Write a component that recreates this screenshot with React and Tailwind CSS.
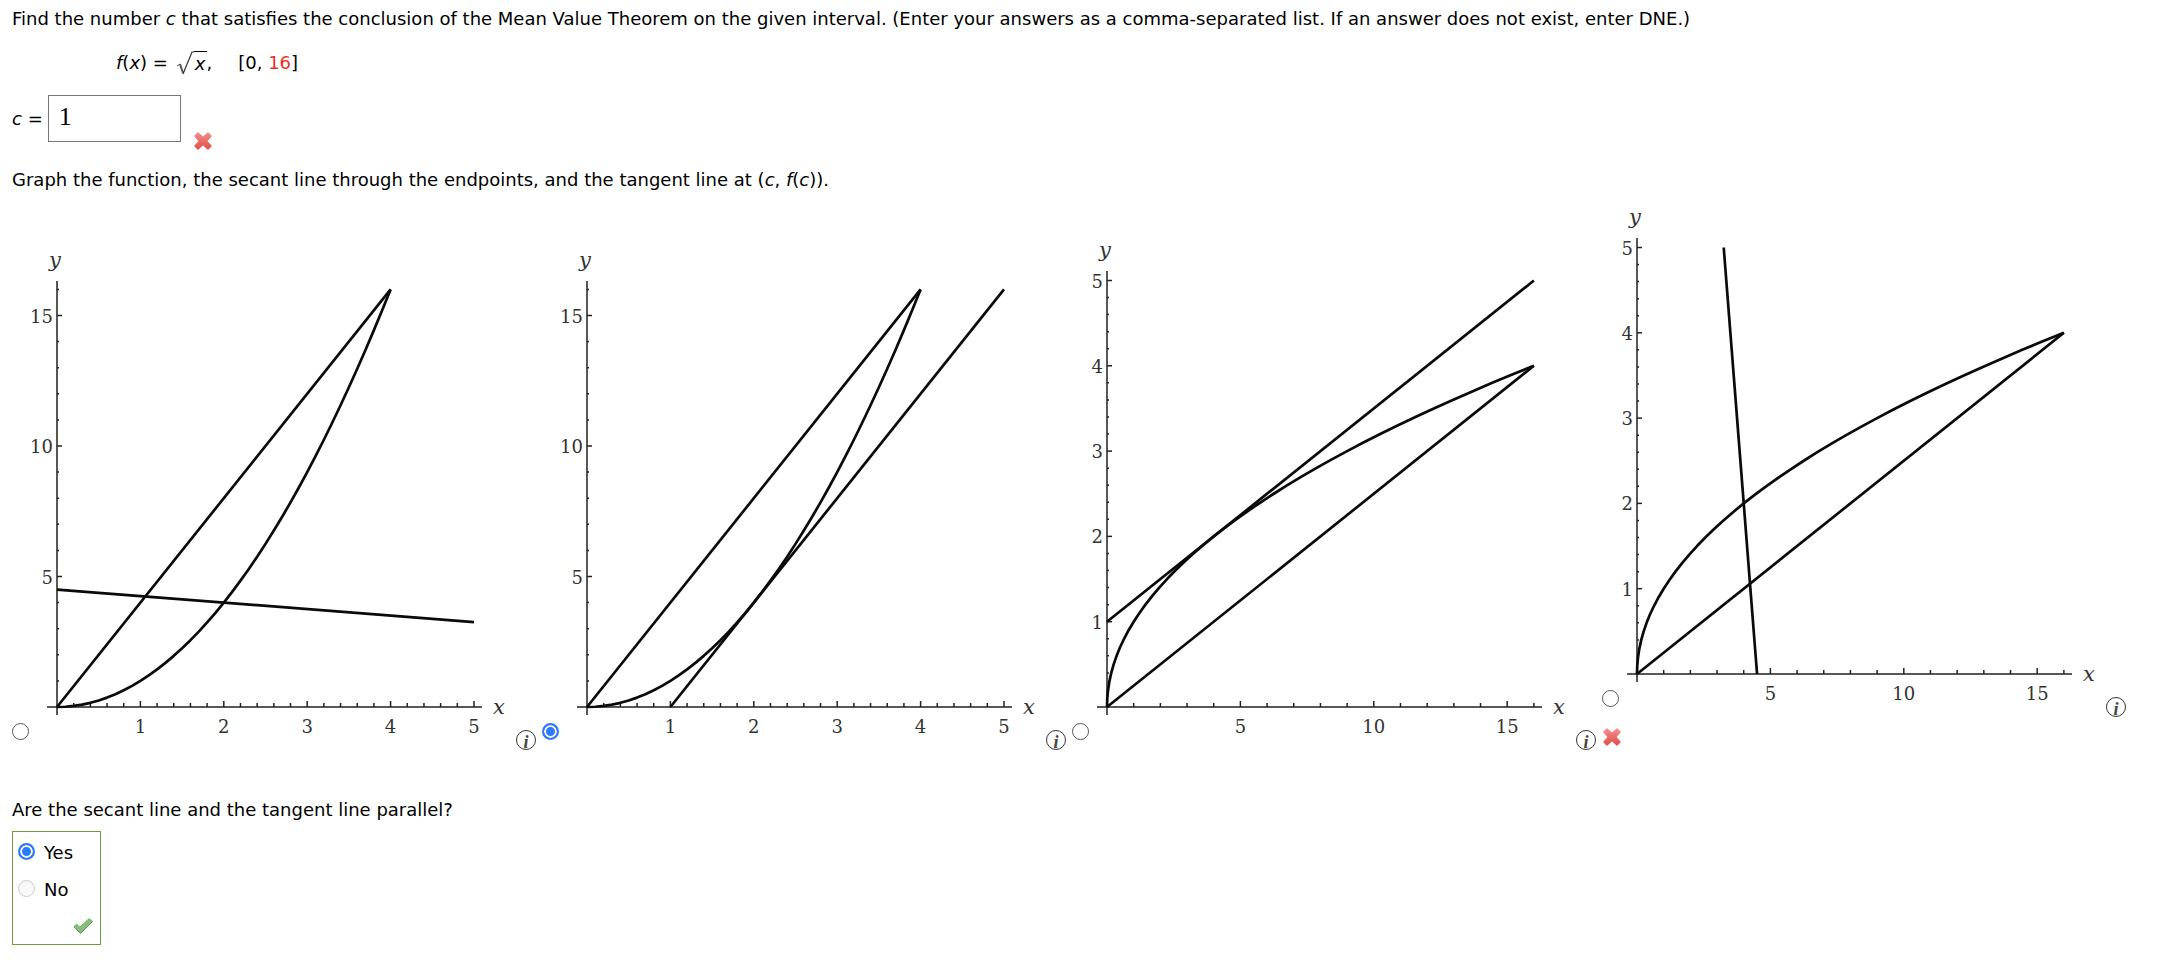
import { useState } from "react";

const SERIF = "'DejaVu Serif', Georgia, serif";

const range = (n) => Array.from({ length: n }, (_, i) => i);

// square: x runs 0-5 and y runs 0-16, root: x runs 0-16 and y runs 0-5
const AXES = {
  square: { ox: 28, sx: 83.4, sy: 26.1, top: 426, xEnd: 425, xMax: 25, xStep: 0.2, xMajor: 5, yMax: 16, yStep: 1, yMajor: 5 },
  root: { ox: 18, sx: 26.68, sy: 85.3, top: 436, xEnd: 435, xMax: 16, xStep: 1, xMajor: 5, yMax: 25, yStep: 0.2, yMajor: 5 },
};

const SQUARE = range(41).map((i) => [i / 10, (i / 10) ** 2]);
const ROOT = range(41).map((i) => [(i / 10) ** 2, i / 10]);

const CHOICES = [
  { id: "a", axes: "square", curve: SQUARE, secant: [[0, 0], [4, 16]], tangent: [[0, 4.5], [5, 3.25]] },
  { id: "b", axes: "square", curve: SQUARE, secant: [[0, 0], [4, 16]], tangent: [[1, 0], [5, 16]] },
  { id: "c", axes: "root", curve: ROOT, secant: [[0, 0], [16, 4]], tangent: [[0, 1], [16, 5]] },
  { id: "d", axes: "root", curve: ROOT, secant: [[0, 0], [16, 4]], tangent: [[3.25, 5], [4.5, 0]] },
];

function Graph({ choice }) {
  const a = AXES[choice.axes];
  const oy = 468;
  const px = (x) => a.ox + x * a.sx;
  const py = (y) => oy - y * a.sy;
  const points = (list) => list.map(([x, y]) => `${px(x)},${py(y)}`).join(" ");

  return (
    <svg width="487" height="511" viewBox="0 0 487 511" className="shrink-0 overflow-visible" role="img" aria-label={`Graph ${choice.id}`}>
      <g stroke="#222" strokeWidth="1.5" fill="none">
        <path d={`M${a.ox - 10} ${oy}H${a.ox + a.xEnd}M${a.ox} ${oy + 8}V${oy - a.top}`} />
        {range(a.xMax + 1).slice(1).map((i) => (
          <path key={i} d={`M${px(i * a.xStep)} ${oy}v${i % a.xMajor === 0 ? -6 : -4}`} />
        ))}
        {range(a.yMax + 1).slice(1).map((i) => (
          <path key={i} d={`M${a.ox} ${py(i * a.yStep)}h${i % a.yMajor === 0 ? 5 : 2}`} />
        ))}
      </g>
      <g stroke="#0a0a0a" strokeWidth="2.7" fill="none" strokeLinejoin="round">
        <polyline points={points(choice.curve)} />
        <polyline points={points(choice.secant)} />
        <polyline points={points(choice.tangent)} />
      </g>
      <g fill="#333" fontFamily={SERIF} fontSize="18">
        {range(a.xMax + 1).slice(1).filter((i) => i % a.xMajor === 0).map((i) => (
          <text key={i} x={px(i * a.xStep)} y={oy + 26} textAnchor="middle">{Math.round(i * a.xStep)}</text>
        ))}
        {range(a.yMax + 1).slice(1).filter((i) => i % a.yMajor === 0).map((i) => (
          <text key={i} x={a.ox - 4} y={py(i * a.yStep) + 7} textAnchor="end">{Math.round(i * a.yStep)}</text>
        ))}
      </g>
      <g fill="#333" fontFamily={SERIF} fontSize="21" fontStyle="italic" textAnchor="middle">
        <text x={a.ox - 2} y={oy - a.top - 14}>y</text>
        <text x={a.ox + a.xEnd + 17} y={oy + 7}>x</text>
      </g>
    </svg>
  );
}

function WrongMark() {
  return (
    <svg width="20" height="20" viewBox="0 0 20 20" role="img" aria-label="Incorrect">
      <defs>
        <linearGradient id="wrong" x1="0" y1="0" x2="0" y2="1">
          <stop offset="0" stopColor="#f48a87" />
          <stop offset="1" stopColor="#e2504b" />
        </linearGradient>
      </defs>
      <path
        d="M5 2L10 6.5L15 2L18 5L13.6 10L18 15L15 18L10 13.5L5 18L2 15L6.4 10L2 5Z"
        fill="url(#wrong)"
        stroke="url(#wrong)"
        strokeWidth="1.4"
        strokeLinejoin="round"
      />
    </svg>
  );
}

function RightMark() {
  return (
    <svg width="22" height="18" viewBox="0 0 22 18" role="img" aria-label="Correct">
      <path d="M2 9.5L4.5 7L8 10L17 1.5L20.5 4L8.5 16.5Z" fill="#86bd78" stroke="#86bd78" strokeLinejoin="round" />
      <path d="M2 10L8.5 16.5L20.5 4.5" fill="none" stroke="#5f9453" strokeLinejoin="round" />
    </svg>
  );
}

const radioClass =
  "appearance-none shrink-0 w-[17px] h-[17px] rounded-full border border-[#555] bg-white checked:border-2 checked:border-[#2a7afe] checked:bg-[#2a7afe] checked:shadow-[inset_0_0_0_2px_white] disabled:border-[#ccc] disabled:bg-[#f8f8f8]";

export default function App() {
  const [answer, setAnswer] = useState("1");
  const [graph, setGraph] = useState("b");

  return (
    <main className="bg-white text-black text-[18px] leading-6 font-['DejaVu_Sans',Verdana,sans-serif] px-3 pt-[7px] pb-[30px]">
      <p>
        Find the number <i>c</i> that satisfies the conclusion of the Mean Value Theorem on the given interval.
        (Enter your answers as a comma-separated list. If an answer does not exist, enter DNE.)
      </p>

      <div className="mt-5 ml-26 h-6 flex items-center">
        <span><i>f</i>(<i>x</i>) =</span>
        <svg width="18" height="24" viewBox="0 0 18 24" className="ml-2" aria-hidden="true">
          <path d="M1 15L4 13" fill="none" stroke="#555" />
          <path d="M4 13L7 22" fill="none" stroke="#555" strokeWidth="2" />
          <path d="M7 23L16 1H18" fill="none" stroke="#333" strokeWidth="1.2" />
        </svg>
        <span className="border-t border-black px-px"><i>x</i></span>
        <span>,</span>
        <span className="ml-[26px]">[0, <span className="text-[#f22c1f]">16</span>]</span>
      </div>

      <div className="mt-5 flex items-start">
        <label htmlFor="c-value" className="leading-[47px]"><i>c</i> =</label>
        <input
          id="c-value"
          value={answer}
          onChange={(e) => setAnswer(e.target.value)}
          className="ml-[5px] w-[133px] h-[47px] border border-[#767676] px-2.5 pb-1 text-[26px] font-['Liberation_Serif',serif]"
        />
        <span className="ml-3 pt-9 leading-0"><WrongMark /></span>
      </div>

      <p className="mt-[17px]">
        Graph the function, the secant line through the endpoints, and the tangent line at (<i>c</i>, <i>f</i>(<i>c</i>)).
      </p>

      <fieldset aria-label="Graph" className="mt-3.5 flex items-end gap-1.5">
        {CHOICES.map((choice) => (
          <div key={choice.id} className="shrink-0">
            <div className="flex items-end">
              <label className="flex items-end">
                <input
                  type="radio"
                  name="graph"
                  checked={graph === choice.id}
                  onChange={() => setGraph(choice.id)}
                  className={`${radioClass} mb-2.5`}
                />
                <Graph choice={choice} />
              </label>
              <button
                type="button"
                aria-label="Graph details"
                className="w-5 h-5 rounded-full border border-[#333] text-[18px] leading-[22px] font-bold italic text-[#444] font-['Liberation_Serif',serif]"
              >
                i
              </button>
            </div>
            {choice.id === "d" && <div className="pt-2.5 pb-[3px]"><WrongMark /></div>}
          </div>
        ))}
      </fieldset>

      <p className="mt-12">Are the secant line and the tangent line parallel?</p>

      <fieldset aria-label="Parallel" className="mt-[9px] w-[89px] border border-[#6a9f42] pl-[5px] pr-1.5 pt-[9px]">
        <label className="flex items-start gap-[9px]">
          <input type="radio" name="parallel" defaultChecked className={`${radioClass} mt-0.5`} />
          Yes
        </label>
        <label className="mt-[13px] flex items-start gap-[9px]">
          <input type="radio" name="parallel" disabled className={`${radioClass} mt-0.5`} />
          No
        </label>
        <div className="mt-[15px] mb-[9px] flex justify-end"><RightMark /></div>
      </fieldset>
    </main>
  );
}
